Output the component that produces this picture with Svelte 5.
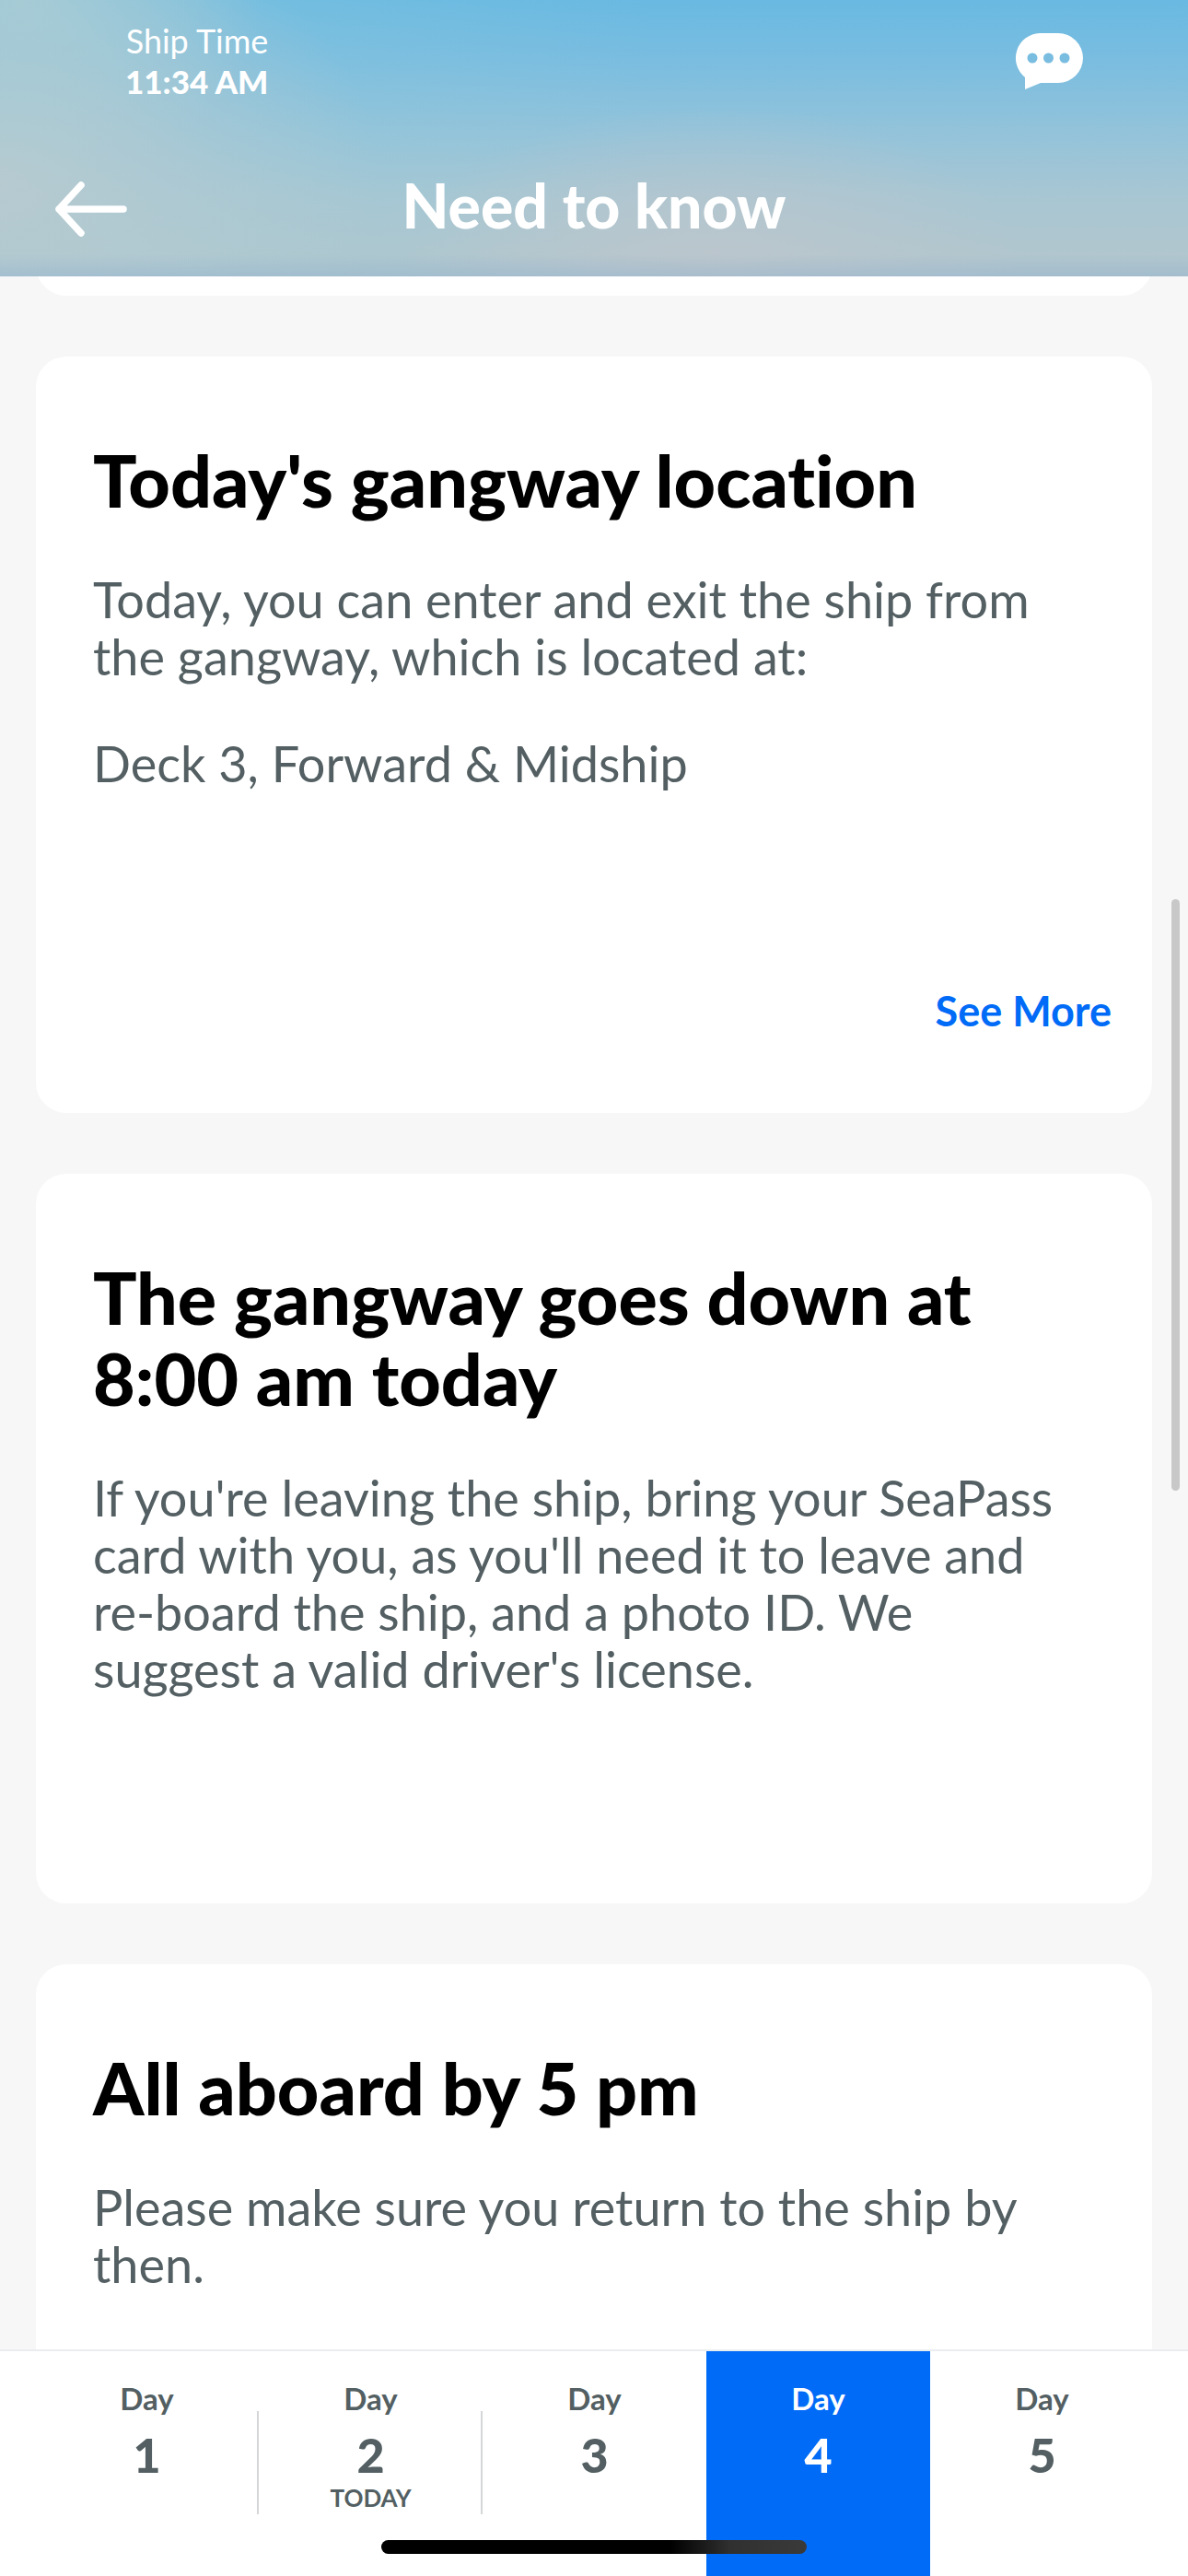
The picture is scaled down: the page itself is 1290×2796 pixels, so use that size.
<script lang="ts">
  let shipTime = '11:34 AM';
  let selectedDay = 4;

  const days = [
    { number: 1, divider: true },
    { number: 2, divider: true, today: true },
    { number: 3 },
    { number: 4 },
    { number: 5 },
  ];

  const cards = [
    {
      title: "Today's gangway location",
      text: [
        'Today, you can enter and exit the ship from the gangway, which is located at:',
        'Deck 3, Forward & Midship',
      ],
      link: 'See More',
    },
    {
      title: 'The gangway goes down at 8:00 am today',
      text: [
        "If you're leaving the ship, bring your SeaPass card with you, as you'll need it to leave and re-board the ship, and a photo ID. We suggest a valid driver's license.",
      ],
    },
    {
      title: 'All aboard by 5 pm',
      text: ['Please make sure you return to the ship by then.'],
    },
  ];
</script>

<div class="screen">
  <header class="header">
    <div class="status">
      <div class="ship-time">
        <span class="label">Ship Time</span>
        <strong class="time">{shipTime}</strong>
      </div>
      <button class="icon-btn chat" aria-label="Chat">
        <svg width="74" height="61" viewBox="0 0 74 61">
          <path
            fill="#fff"
            fill-rule="evenodd"
            d="M27 0H47A27 27 0 0 1 47 54H28L11 61V48A27 27 0 0 1 27 0ZM19 21.500a5.500 5.500 0 1 0 0 11 5.500 5.500 0 0 0 0-11ZM36.500 21.500a5.500 5.500 0 1 0 0 11 5.500 5.500 0 0 0 0-11ZM54 21.500a5.500 5.500 0 1 0 0 11 5.500 5.500 0 0 0 0-11Z"
          />
        </svg>
      </button>
    </div>
    <div class="title-bar">
      <button class="icon-btn" aria-label="Back">
        <svg width="78" height="62" viewBox="0 0 78 62">
          <path
            d="M28 5 4 31 28 57M4 31H74"
            fill="none"
            stroke="#fff"
            stroke-width="7.500"
            stroke-linecap="round"
            stroke-linejoin="round"
          />
        </svg>
      </button>
      <h1>Need to know</h1>
    </div>
  </header>

  <main class="feed">
    <div class="card card-previous"></div>
    {#each cards as card}
      <article class="card">
        <h2>{card.title}</h2>
        <div class="card-text">
          {#each card.text as paragraph}
            <p>{paragraph}</p>
          {/each}
        </div>
        <div class="card-footer" class:has-link={card.link}>
          {#if card.link}
            <a href="#gangway">{card.link}</a>
          {/if}
        </div>
      </article>
    {/each}
    <div class="scrollbar"></div>
  </main>

  <nav class="days">
    {#each days as day}
      <button
        class="day"
        class:selected={day.number === selectedDay}
        class:divider={day.divider}
        on:click={() => (selectedDay = day.number)}
      >
        <span class="day-label">Day</span>
        <span class="day-number">{day.number}</span>
        {#if day.today}
          <span class="day-today">TODAY</span>
        {/if}
      </button>
    {/each}
    <div class="home-indicator"></div>
  </nav>
</div>

<style>
  :global(body) {
    margin: 0;
    background: #f7f7f7;
  }

  .screen {
    display: flex;
    flex-direction: column;
    height: 100vh;
    overflow: hidden;
    background: #f7f7f7;
    font-family: Lato, 'Liberation Sans', sans-serif;
    font-variant-ligatures: none;
  }

  h1,
  h2,
  p {
    margin: 0;
  }

  button {
    padding: 0;
    border: none;
    background: none;
    font-family: inherit;
    cursor: pointer;
  }

  .header {
    flex: none;
    box-sizing: border-box;
    height: 300px;
    color: #fff;
    background:
      linear-gradient(to bottom, transparent 92%, rgba(150, 180, 205, 0.5) 100%),
      radial-gradient(ellipse 20% 70% at 2% 0%, rgba(172, 205, 212, 0.8), rgba(172, 205, 212, 0) 100%),
      radial-gradient(ellipse 32% 100% at 0% 65%, rgba(184, 202, 208, 0.95), rgba(184, 202, 208, 0) 100%),
      radial-gradient(ellipse 26% 60% at 60% 98%, rgba(190, 198, 204, 0.8), rgba(190, 198, 204, 0) 100%),
      linear-gradient(to right, rgba(150, 205, 215, 0.35), rgba(150, 205, 215, 0) 55%),
      linear-gradient(to bottom, #69b9e2 0%, #7abde0 22%, #93c3da 48%, #a7c6d3 70%, #b1c6ce 92%);
  }

  .status {
    display: flex;
    justify-content: space-between;
    align-items: flex-start;
    padding: 22px 114px 0 136px;
  }

  .ship-time {
    display: flex;
    flex-direction: column;
    align-items: flex-end;
  }

  .label {
    font-size: 36px;
    line-height: 44px;
  }

  .time {
    font-size: 35px;
    line-height: 44px;
    font-weight: 900;
  }

  .icon-btn svg {
    display: block;
  }

  .chat {
    margin-top: 14px;
  }

  .title-bar {
    display: grid;
    grid-template-columns: 78px 1fr 78px;
    align-items: center;
    padding: 69px 60px 0;
  }

  .title-bar .icon-btn {
    padding-top: 8px;
  }

  h1 {
    font-size: 66px;
    line-height: 88px;
    font-weight: 900;
    text-align: center;
  }

  .feed {
    position: relative;
    flex: 1;
    min-height: 0;
    display: flex;
    flex-direction: column;
    gap: 66px;
    padding: 0 39px;
    overflow: hidden;
  }

  .card {
    flex: none;
    box-sizing: border-box;
    padding: 90px 44px 0 62px;
    border-radius: 33px;
    background: #fff;
  }

  /* only the bottom edge of the card scrolled under the header */
  .card-previous {
    height: 100px;
    margin-top: -79px;
  }

  h2 {
    font-size: 79px;
    line-height: 88px;
    font-weight: 900;
    color: #000;
  }

  .card-text {
    display: flex;
    flex-direction: column;
    gap: 54px;
    margin-top: 55px;
    padding-right: 44px;
    font-size: 54px;
    line-height: 62px;
    color: #535f62;
  }

  .card-footer {
    height: 223px;
  }

  .card-footer.has-link {
    display: flex;
    justify-content: flex-end;
    align-items: flex-end;
    box-sizing: border-box;
    height: 348px;
    padding-bottom: 84px;
  }

  a {
    font-size: 45px;
    line-height: 54px;
    font-weight: 700;
    color: #006bf7;
    text-decoration: none;
  }

  .scrollbar {
    position: absolute;
    top: 676px;
    right: 9px;
    width: 9px;
    height: 642px;
    border-radius: 5px;
    background: #c8c8c8;
  }

  .days {
    position: relative;
    flex: none;
    display: grid;
    grid-template-columns: repeat(5, 1fr);
    height: 244px;
    padding: 0 37px 0 38px;
    border-top: 2px solid #ebecf0;
    background: #fff;
  }

  .day {
    position: relative;
    display: flex;
    flex-direction: column;
    align-items: center;
    padding-top: 31px;
    color: #535f62;
    font-weight: 700;
  }

  .day.selected {
    background: #006bf7;
    color: #fff;
  }

  .day.divider::after {
    content: '';
    position: absolute;
    top: 65px;
    right: 0;
    width: 2px;
    height: 112px;
    background: #d4d6d7;
  }

  .day-label {
    font-size: 33px;
    line-height: 40px;
  }

  .day-number {
    margin-top: 6px;
    font-size: 52px;
    line-height: 70px;
    font-weight: 900;
  }

  .day-today {
    font-size: 26px;
    line-height: 24px;
  }

  .home-indicator {
    position: absolute;
    bottom: 24px;
    left: 50%;
    width: 462px;
    height: 15px;
    margin-left: -231px;
    border-radius: 8px;
    background: linear-gradient(to right, #000 68%, #303030 82%, #3a3a3a 100%);
  }
</style>
